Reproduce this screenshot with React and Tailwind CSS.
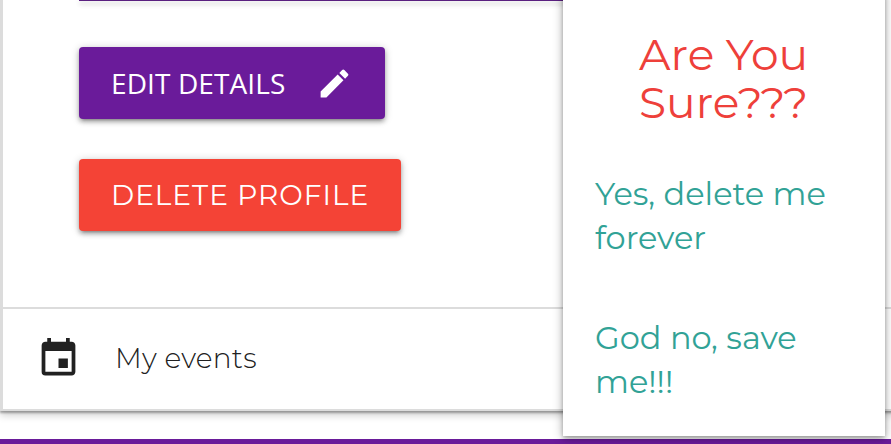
import { MdEdit, MdEvent } from "react-icons/md";

const raised =
  "shadow-[0_3px_4px_0_rgba(0,0,0,0.26),0_5px_2px_-4px_rgba(0,0,0,0.2),0_1px_8px_0_rgba(0,0,0,0.2)]";
const display = "font-[Montserrat,Inter,sans-serif]";

function ProfileActions() {
  return (
    <section className="flex h-[309px] flex-col items-start border-b-2 border-[#dcdcdc] pl-[76px]">
      <div className={`h-px w-[520px] shrink-0 bg-[#5a2080] ${raised}`} />
      <button
        className={`mt-[46px] flex h-[72px] w-[306px] shrink-0 items-center justify-between rounded bg-[#6a1b9a] pr-8 pl-8 font-['Open_Sans',sans-serif] text-[28px] text-white ${raised}`}
      >
        <span className="whitespace-nowrap tracking-[0.1px]">EDIT DETAILS</span>
        <MdEdit className="size-[37px]" />
      </button>
      <button
        className={`mt-10 flex h-[72px] w-[322px] shrink-0 items-center rounded bg-[#f44336] pl-8 text-[28px] text-white ${raised} ${display}`}
      >
        <span className="whitespace-nowrap tracking-[1px]">DELETE PROFILE</span>
      </button>
    </section>
  );
}

function ConfirmDialog() {
  return (
    <div
      className={`absolute top-[-10px] left-[563px] h-[446px] w-[322px] bg-white px-8 pt-10 shadow-[0_2px_4px_0_rgba(0,0,0,0.25),0_2px_10px_0_rgba(0,0,0,0.3)] ${display}`}
    >
      <h4 className="pl-11 text-[44px] leading-[48px] text-[#ee403a]">Are You Sure???</h4>
      <div className="mt-[46px] text-[32px] leading-[44px] text-[#31a296]">
        <p>Yes, delete me forever</p>
        <p className="mt-14">God no, save me!!!</p>
      </div>
    </div>
  );
}

export default function App() {
  return (
    <main className="relative flex h-[444px] w-[891px] flex-col overflow-hidden bg-white">
      <div className="h-[411px] w-[910px] shrink-0 border-b-2 border-l-[3px] border-[#dcdcdc] bg-white shadow-[0_2px_2px_0_rgba(0,0,0,0.3),0_4px_8px_0_rgba(0,0,0,0.2)]">
        <ProfileActions />
        <div className={`flex h-[98px] items-center pl-[33px] text-[28px] text-[#212121] ${display}`}>
          <MdEvent className="size-[45px]" />
          <span className="ml-[34px] font-light whitespace-nowrap tracking-[0.25px]">My events</span>
        </div>
      </div>
      <footer className="relative mt-7 h-[5px] shrink-0 bg-[#6a1b9a]" />
      <ConfirmDialog />
    </main>
  );
}
